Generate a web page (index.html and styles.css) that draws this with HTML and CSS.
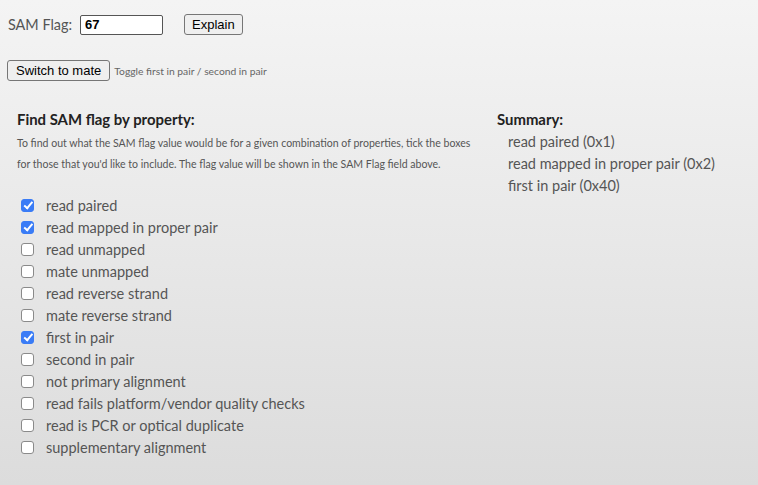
FILE: index.html
```html
<!DOCTYPE html>
<html>
<head>
<meta charset="utf-8">
<link rel="stylesheet" href="styles.css">
</head>
<body>
<div class="page">
  <div class="row flag-row">
    <label class="flag-label" for="flag">SAM Flag:</label>
    <input class="flag-input" id="flag" type="text" value="67">
    <button class="btn explain">Explain</button>
  </div>
  <div class="row mate-row">
    <button class="btn">Switch to mate</button>
    <span class="hint">Toggle first in pair / second in pair</span>
  </div>
  <div class="columns">
    <div class="left">
      <h3 class="heading">Find SAM flag by property:</h3>
      <p class="desc">To find out what the SAM flag value would be for a given combination of properties, tick the boxes for those that you'd like to include. The flag value will be shown in the SAM Flag field above.</p>
      <ul class="props">
        <li><input type="checkbox" class="cb" checked><span>read paired</span></li>
        <li><input type="checkbox" class="cb" checked><span>read mapped in proper pair</span></li>
        <li><input type="checkbox" class="cb"><span>read unmapped</span></li>
        <li><input type="checkbox" class="cb"><span>mate unmapped</span></li>
        <li><input type="checkbox" class="cb"><span>read reverse strand</span></li>
        <li><input type="checkbox" class="cb"><span>mate reverse strand</span></li>
        <li><input type="checkbox" class="cb" checked><span>first in pair</span></li>
        <li><input type="checkbox" class="cb"><span>second in pair</span></li>
        <li><input type="checkbox" class="cb"><span>not primary alignment</span></li>
        <li><input type="checkbox" class="cb"><span>read fails platform/vendor quality checks</span></li>
        <li><input type="checkbox" class="cb"><span>read is PCR or optical duplicate</span></li>
        <li><input type="checkbox" class="cb"><span>supplementary alignment</span></li>
      </ul>
    </div>
    <div class="right">
      <h3 class="heading">Summary:</h3>
      <ul class="summary">
        <li>read paired (0x1)</li>
        <li>read mapped in proper pair (0x2)</li>
        <li>first in pair (0x40)</li>
      </ul>
    </div>
  </div>
</div>
</body>
</html>
```

FILE: styles.css
```css
html, body {
  margin: 0;
  padding: 0;
  height: 100%;
}
body {
  background: linear-gradient(to bottom, #f4f4f4 0%, #dcdcdc 100%);
  font-family: Lato, "Open Sans", sans-serif;
  color: #555;
}
.page {
  padding: 14px 8px 0 8px;
}
.row {
  display: flex;
  align-items: center;
}
.flag-label {
  font-size: 14.4px;
  color: #555;
  margin-right: 8px;
}
.flag-input {
  box-sizing: border-box;
  width: 83px;
  height: 20px;
  border: 1px solid #555;
  border-radius: 2px;
  padding: 0 4px;
  font-family: "Liberation Sans", Arial, sans-serif;
  font-weight: bold;
  font-size: 13px;
  color: #000;
  background: #fff;
  margin: 0;
}
.btn {
  box-sizing: border-box;
  height: 21px;
  padding: 0 7px;
  border: 1px solid #767676;
  border-radius: 3px;
  background: #efefef;
  font-family: "Liberation Sans", Arial, sans-serif;
  font-size: 13px;
  color: #000;
  margin: 0;
}
.explain {
  margin-left: 21px;
}
.mate-row {
  margin-top: 25px;
}
.mate-row .btn {
  margin-left: -1px;
  padding: 0 8px 0 8px;
}
.hint {
  font-size: 10.3px;
  color: #666;
  margin-left: 4px;
}
.columns {
  display: flex;
  margin-top: 28px;
  padding-left: 9px;
}
.left {
  width: 480px;
}
.right {
  flex: 1;
}
.heading {
  font-size: 14.9px;
  font-weight: bold;
  color: #222;
  margin: 0;
  line-height: 20px;
}
.desc {
  font-size: 10.55px;
  line-height: 21px;
  margin: 4px 0 0 0;
  max-width: 455px;
  color: #555;
}
.props {
  list-style: none;
  margin: 19px 0 0 0;
  padding: 0 0 0 4px;
}
.props li {
  display: flex;
  align-items: center;
  height: 22px;
  font-size: 14.5px;
}
.cb {
  appearance: none;
  -webkit-appearance: none;
  box-sizing: border-box;
  width: 13px;
  height: 13px;
  margin: 0 12px 0 0;
  border: 1px solid #8a8a8a;
  border-radius: 3px;
  background: #fff;
  position: relative;
}
.cb:checked {
  background: #3a7cf6;
  border-color: #3a7cf6;
}
.cb:checked::after {
  content: "";
  position: absolute;
  left: 3.5px;
  top: 0.5px;
  width: 3px;
  height: 6.5px;
  border: solid #fff;
  border-width: 0 2.2px 2.2px 0;
  transform: rotate(40deg);
}
.summary {
  list-style: none;
  margin: 2px 0 0 0;
  padding: 0 0 0 11px;
  font-size: 14.5px;
}
.summary li {
  line-height: 22px;
}
```
